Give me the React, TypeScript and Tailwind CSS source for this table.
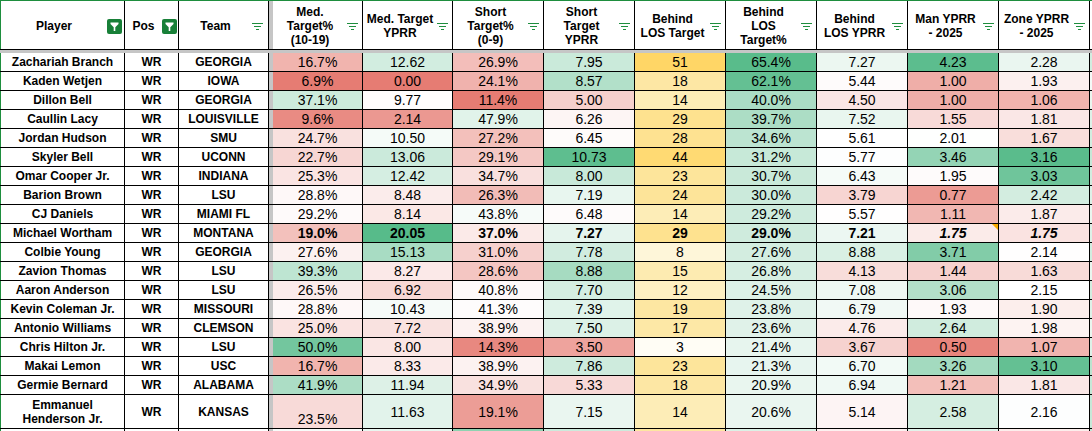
import React from "react";

type RGB = [number, number, number];
type Stop = [number, RGB];

const RED: RGB = [230, 124, 115];
const WHITE: RGB = [255, 255, 255];
const GREEN: RGB = [87, 187, 138];

function heat(v: number, stops: Stop[]) {
  const toCss = (c: number[]) => `rgb(${c.map((x) => Math.round(x)).join(",")})`;
  if (v <= stops[0][0]) return toCss(stops[0][1]);
  for (let i = 1; i < stops.length; i++) {
    const [v0, c0] = stops[i - 1];
    const [v1, c1] = stops[i];
    if (v <= v1) {
      const t = (v - v0) / (v1 - v0);
      return toCss([0, 1, 2].map((k) => c0[k] + (c1[k] - c0[k]) * t));
    }
  }
  return toCss(stops[stops.length - 1][1]);
}

const pct = (v: number) => v.toFixed(1) + "%";
const dec = (v: number) => v.toFixed(2);
const int = (v: number) => String(v);
const none = () => "";

// the last column only peeks in at the right edge, so it carries no text
const columns = [
  { title: ["Med.", "Target%", "(10-19)"], w: "w-[90px]", fmt: pct, scale: [[6.9, RED], [30, WHITE], [54, GREEN]] as Stop[] },
  { title: ["Med. Target", "YPRR"], w: "w-[90px]", fmt: dec, scale: [[0, RED], [9.9, WHITE], [20.05, GREEN]] as Stop[] },
  { title: ["Short", "Target%", "(0-9)"], w: "w-[91px]", fmt: pct, scale: [[11.4, RED], [42, WHITE], [75, GREEN]] as Stop[] },
  { title: ["Short", "Target", "YPRR"], w: "w-[91px]", fmt: dec, scale: [[2.17, RED], [6.6, WHITE], [10.9, GREEN]] as Stop[] },
  { title: ["Behind", "LOS Target"], w: "w-[91px]", fmt: int, scale: [[3, [255, 253, 245]], [17, [253, 232, 166]], [51, [255, 214, 102]]] as Stop[] },
  { title: ["Behind", "LOS", "Target%"], w: "w-[91px]", fmt: pct, scale: [[14, WHITE], [66, GREEN]] as Stop[] },
  { title: ["Behind", "LOS YPRR"], w: "w-[91px]", fmt: dec, scale: [[0, RED], [5.6, WHITE], [20, GREEN]] as Stop[] },
  { title: ["Man YPRR", "- 2025"], w: "w-[91px]", fmt: dec, scale: [[0.39, RED], [2.0, WHITE], [4.3, GREEN]] as Stop[] },
  { title: ["Zone YPRR", "- 2025"], w: "w-[91px]", fmt: dec, scale: [[0.27, RED], [2.15, WHITE], [3.18, GREEN]] as Stop[] },
  { title: [], w: "w-[91px]", fmt: none, scale: [[0.5, RED], [2.0, WHITE], [3.5, GREEN]] as Stop[] },
];

type Row = { name: string; pos: string; team: string; v: number[] };

const rows: Row[] = [
  { name: "Zachariah Branch", pos: "WR", team: "GEORGIA", v: [16.7, 12.62, 26.9, 7.95, 51, 65.4, 7.27, 4.23, 2.28, 2.4] },
  { name: "Kaden Wetjen", pos: "WR", team: "IOWA", v: [6.9, 0.0, 24.1, 8.57, 18, 62.1, 5.44, 1.0, 1.93, 2.1] },
  { name: "Dillon Bell", pos: "WR", team: "GEORGIA", v: [37.1, 9.77, 11.4, 5.0, 14, 40.0, 4.5, 1.0, 1.06, 2.2] },
  { name: "Caullin Lacy", pos: "WR", team: "LOUISVILLE", v: [9.6, 2.14, 47.9, 6.26, 29, 39.7, 7.52, 1.55, 1.81, 2.3] },
  { name: "Jordan Hudson", pos: "WR", team: "SMU", v: [24.7, 10.5, 27.2, 6.45, 28, 34.6, 5.61, 2.01, 1.67, 2.4] },
  { name: "Skyler Bell", pos: "WR", team: "UCONN", v: [22.7, 13.06, 29.1, 10.73, 44, 31.2, 5.77, 3.46, 3.16, 2.5] },
  { name: "Omar Cooper Jr.", pos: "WR", team: "INDIANA", v: [25.3, 12.42, 34.7, 8.0, 23, 30.7, 6.43, 1.95, 3.03, 2.4] },
  { name: "Barion Brown", pos: "WR", team: "LSU", v: [28.8, 8.48, 26.3, 7.19, 24, 30.0, 3.79, 0.77, 2.42, 2.3] },
  { name: "CJ Daniels", pos: "WR", team: "MIAMI FL", v: [29.2, 8.14, 43.8, 6.48, 14, 29.2, 5.57, 1.11, 1.87, 2.2] },
  { name: "Michael Wortham", pos: "WR", team: "MONTANA", v: [19.0, 20.05, 37.0, 7.27, 29, 29.0, 7.21, 1.75, 1.75, 2.3] },
  { name: "Colbie Young", pos: "WR", team: "GEORGIA", v: [27.6, 15.13, 31.0, 7.78, 8, 27.6, 8.88, 3.71, 2.14, 2.4] },
  { name: "Zavion Thomas", pos: "WR", team: "LSU", v: [39.3, 8.27, 28.6, 8.88, 15, 26.8, 4.13, 1.44, 1.63, 2.2] },
  { name: "Aaron Anderson", pos: "WR", team: "LSU", v: [26.5, 6.92, 40.8, 7.7, 12, 24.5, 7.08, 3.06, 2.15, 2.4] },
  { name: "Kevin Coleman Jr.", pos: "WR", team: "MISSOURI", v: [28.8, 10.43, 41.3, 7.39, 19, 23.8, 6.79, 1.93, 1.9, 2.3] },
  { name: "Antonio Williams", pos: "WR", team: "CLEMSON", v: [25.0, 7.72, 38.9, 7.5, 17, 23.6, 4.76, 2.64, 1.98, 2.2] },
  { name: "Chris Hilton Jr.", pos: "WR", team: "LSU", v: [50.0, 8.0, 14.3, 3.5, 3, 21.4, 3.67, 0.5, 1.07, 2.3] },
  { name: "Makai Lemon", pos: "WR", team: "USC", v: [16.7, 8.33, 38.9, 7.86, 23, 21.3, 6.7, 3.26, 3.1, 2.6] },
  { name: "Germie Bernard", pos: "WR", team: "ALABAMA", v: [41.9, 11.94, 34.9, 5.33, 18, 20.9, 6.94, 1.21, 1.81, 2.5] },
  { name: "Emmanuel Henderson Jr.", pos: "WR", team: "KANSAS", v: [23.5, 11.63, 19.1, 7.15, 14, 20.6, 5.14, 2.58, 2.16, 2.5] },
  // next row, only its top edge shows under the fold
  { name: "", pos: "", team: "", v: [31.0, 11.2, 64.0, 7.9, 20, 25.0, 5.0, 2.4, 1.9, 2.5] },
];

function FilterOn() {
  return (
    <svg width="15" height="15" viewBox="0 0 15 15" className="shrink-0">
      <rect width="15" height="15" rx="2" fill="#188038" />
      <path d="M3.5 3.5h8v1.5L8.3 8.2V12H6.7V8.2L3.5 5Z" fill="#fff" />
    </svg>
  );
}

function FilterLines() {
  return (
    <svg width="11" height="8" viewBox="0 0 11 8" className="shrink-0">
      <path d="M0 0.5h11M2 3.5h7M4 6.5h3" stroke="#1e8e3e" strokeWidth="1" />
    </svg>
  );
}

function HeadText({ lines }: { lines: string[] }) {
  return (
    <div className="flex-1 text-center text-[12px] leading-[14px] font-bold">
      {lines.map((l) => (
        <div key={l}>{l}</div>
      ))}
    </div>
  );
}

export default function App() {
  return (
    <div className="w-[1092px] h-[431px] overflow-hidden bg-white text-black font-['Liberation_Sans',Arial,sans-serif]">
      <div className="w-max">
        {/* header */}
        <div className="flex h-[50px] border-t border-t-[#1e8e3e] border-b border-b-black">
          <div className="w-[125px] flex items-center pt-[2px] border-l border-l-[#1e8e3e] border-r border-r-black">
            <HeadText lines={["Player"]} />
            <div className="mr-[2px]">
              <FilterOn />
            </div>
          </div>
          <div className="w-[54px] flex items-center pt-[2px] border-r border-r-black">
            <HeadText lines={["Pos"]} />
            <div className="mr-[1px]">
              <FilterOn />
            </div>
          </div>
          <div className="w-[90px] flex items-center pt-[2px] border-r border-r-black">
            <HeadText lines={["Team"]} />
            <div className="mr-[5px] mt-[2px]">
              <FilterLines />
            </div>
          </div>
          <div className="w-[4px] bg-[#c6c6c6]" />
          {columns.map((c, ci) => (
            <div key={ci} className={`${c.w} shrink-0 flex items-center pt-[2px] border-r border-r-black`}>
              <HeadText lines={c.title} />
              <div className="mr-[4px] mt-[2px]">
                <FilterLines />
              </div>
            </div>
          ))}
        </div>

        {/* frozen row divider */}
        <div className="h-[3px] bg-[#c6c6c6]" />

        {rows.map((r, ri) => {
          const tall = r.name.length > 20;
          const bold = r.name === "Michael Wortham";
          const blank = r.name === "";
          return (
            <div key={ri} className={`flex border-b border-b-black ${tall ? "h-[34px]" : "h-[19px]"}`}>
              <div className="w-[125px] shrink-0 flex items-center justify-center px-[3px] text-center text-[12px] leading-[14px] font-bold border-l border-l-[#1e8e3e] border-r border-r-black">
                {r.name}
              </div>
              <div className="w-[54px] shrink-0 flex items-center justify-center text-[12px] font-bold border-r border-r-black">
                {r.pos}
              </div>
              <div className="w-[90px] shrink-0 flex items-center justify-center text-[12px] font-bold border-r border-r-black">
                {r.team}
              </div>
              <div className="w-[4px] shrink-0 bg-[#c6c6c6]" />
              {columns.map((c, ci) => (
                <div
                  key={ci}
                  className={`${c.w} shrink-0 relative flex justify-center text-[14px] leading-[16px] border-r border-r-black ${
                    tall && ci === 0 ? "items-end pb-[1px]" : "items-center"
                  } ${bold ? "font-bold" : ""} ${bold && (ci === 7 || ci === 8) ? "italic" : ""}`}
                  style={{ backgroundColor: heat(r.v[ci], c.scale) }}
                >
                  {blank ? "" : c.fmt(r.v[ci])}
                  {bold && ci === 7 && (
                    <div className="absolute top-0 right-0 w-0 h-0 border-l-[6px] border-l-transparent border-t-[6px] border-t-[#f9ab00]" />
                  )}
                </div>
              ))}
            </div>
          );
        })}
      </div>
    </div>
  );
}
